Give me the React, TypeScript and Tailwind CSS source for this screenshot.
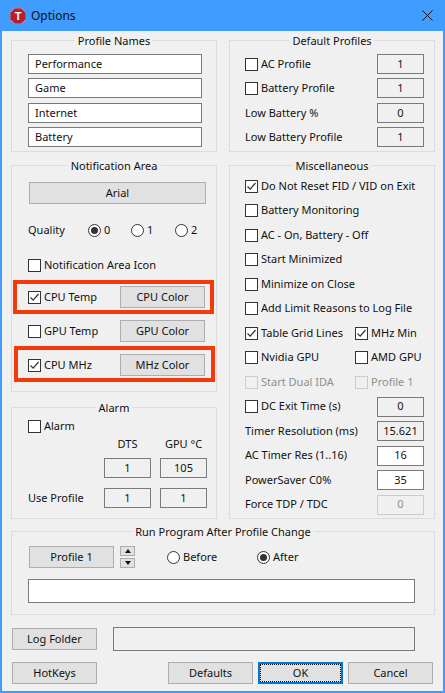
import type { ReactNode } from "react";

const Group = ({ title, className, children }: { title: string; className: string; children: ReactNode }) => (
  <div className={`relative border border-[#dcdcdc] ${className}`}>
    <span className="absolute -top-2 left-1/2 -translate-x-1/2 bg-[#f0f0f0] px-[3px] leading-4 whitespace-nowrap">
      {title}
    </span>
    {children}
  </div>
);

const Check = ({ label, checked, disabled }: { label: string; checked?: boolean; disabled?: boolean }) => (
  <div className={`flex h-5 items-center gap-[3px] whitespace-nowrap ${disabled ? "text-[#8f8f8f]" : ""}`}>
    <div className={`flex size-[13px] shrink-0 items-center justify-center border ${disabled ? "border-[#cccccc]" : "border-[#333333] bg-white"}`}>
      {checked && (
        <svg width="11" height="11" viewBox="0 0 11 11" fill="none" stroke="#333333" strokeWidth="1.2">
          <path d="M1.5 5.5 L4.2 8.2 L9.5 2" />
        </svg>
      )}
    </div>
    {label}
  </div>
);

const Field = ({ value, white, disabled }: { value: string; white?: boolean; disabled?: boolean }) => (
  <div
    className={`flex h-5 w-[47px] shrink-0 items-center justify-center border ${
      disabled ? "border-[#cccccc] text-[#8f8f8f]" : "border-[#7a7a7a]"
    } ${white ? "bg-white" : ""}`}
  >
    {value}
  </div>
);

const Btn = ({ label, className = "w-[85px]" }: { label: string; className?: string }) => (
  <div className={`flex h-[22px] shrink-0 items-center justify-center border border-[#adadad] bg-[#e1e1e1] ${className}`}>{label}</div>
);

const Radio = ({ label, on, className }: { label: string; on?: boolean; className: string }) => (
  <div className={`flex h-5 items-center gap-[3px] ${className}`}>
    <div className="flex size-[13px] shrink-0 items-center justify-center rounded-full border border-[#333333] bg-white">
      {on && <div className="size-[7px] rounded-full bg-[#333333]" />}
    </div>
    {label}
  </div>
);

const TextBox = ({ value }: { value: string }) => (
  <div className="flex h-5 w-[174px] items-center border border-[#7a7a7a] bg-white pl-[6px]">{value}</div>
);

const Row = ({ children }: { children: ReactNode }) => <div className="flex h-5 items-center justify-between">{children}</div>;

const RedBox = ({ className }: { className: string }) => <div className={`absolute border-[4px] border-[#f53a0a] ${className}`} />;

const App = () => {
  return (
    <div className="flex h-[693px] w-[445px] flex-col overflow-hidden border-x-2 border-b-2 border-[#409cff] bg-[#f0f0f0] font-['Noto_Sans',sans-serif] text-[11px] text-[#111111]">
      <div className="-mx-[2px] flex h-[31px] shrink-0 items-center bg-[#409cff] pr-3 pl-[10px]">
        <svg width="16" height="16" viewBox="0 0 16 16">
          <path d="M4.7 0 H11.3 L16 4.7 V11.3 L11.3 16 H4.7 L0 11.3 V4.7 Z" fill="#b7202e" stroke="#e8c4c4" strokeWidth="0.6" />
          <text x="8" y="12" textAnchor="middle" fontSize="11" fontWeight="700" fill="#ffffff" fontFamily="Liberation Sans">T</text>
        </svg>
        <span className="ml-[5px] text-[12px]">Options</span>
        <svg className="ml-auto" width="11" height="11" viewBox="0 0 11 11" stroke="#111111" strokeWidth="1" fill="none">
          <path d="M0.5 0.5 L10.5 10.5 M10.5 0.5 L0.5 10.5" />
        </svg>
      </div>

      <div className="flex flex-col pt-[9px] pr-2 pl-[9px]">
        <div className="flex gap-3">
          <div className="flex w-[206px] flex-col">
            <Group title="Profile Names" className="flex h-[112px] flex-col gap-[4.4px] pt-[13px] pl-4">
              <TextBox value="Performance" />
              <TextBox value="Game" />
              <TextBox value="Internet" />
              <TextBox value="Battery" />
            </Group>

            <Group title="Notification Area" className="mt-[13px] flex h-[227px] flex-col pt-4 pl-4">
              <Btn label="Arial" className="ml-px w-[177px]" />
              <div className="mt-4 flex h-5 items-center">
                <span className="w-[60px]">Quality</span>
                <Radio label="0" on className="w-[43px]" />
                <Radio label="1" className="w-[44px]" />
                <Radio label="2" className="w-[30px]" />
              </div>
              <div className="mt-[15px]">
                <Check label="Notification Area Icon" />
              </div>
              <div className="relative mt-[11px] flex h-[22px] items-center justify-between pr-[11px]">
                <RedBox className="-top-[6px] right-[2px] -bottom-[6px] -left-[15px]" />
                <Check label="CPU Temp" checked />
                <Btn label="CPU Color" />
              </div>
              <div className="mt-3 flex h-[22px] items-center justify-between pr-[11px]">
                <Check label="GPU Temp" />
                <Btn label="GPU Color" />
              </div>
              <div className="relative mt-3 flex h-[22px] items-center justify-between pr-[11px]">
                <RedBox className="-top-2 right-px -bottom-[6px] -left-[14px]" />
                <Check label="CPU MHz" checked />
                <Btn label="MHz Color" />
              </div>
            </Group>

            <Group title="Alarm" className="mt-[15px] flex h-[112px] flex-col pt-2 pl-4">
              <Check label="Alarm" />
              <div className="flex h-4 items-center gap-[9px] pl-[76px]">
                <span className="w-[47px] text-center">DTS</span>
                <span className="w-[47px] text-center">GPU °C</span>
              </div>
              <div className="mt-[6px] flex gap-[9px] pl-[76px]">
                <Field value="1" />
                <Field value="105" />
              </div>
              <div className="mt-[10px] flex items-center gap-[9px]">
                <span className="w-[67px]">Use Profile</span>
                <Field value="1" />
                <Field value="1" />
              </div>
            </Group>
          </div>

          <div className="flex w-[206px] flex-col">
            <Group title="Default Profiles" className="flex h-[112px] flex-col gap-[4.4px] pt-[13px] pr-[10px] pl-[15px]">
              <Row>
                <Check label="AC Profile" />
                <Field value="1" />
              </Row>
              <Row>
                <Check label="Battery Profile" />
                <Field value="1" />
              </Row>
              <Row>
                Low Battery %
                <Field value="0" />
              </Row>
              <Row>
                Low Battery Profile
                <Field value="1" />
              </Row>
            </Group>

            <Group title="Miscellaneous" className="mt-[13px] flex h-[354px] flex-col gap-[4.5px] pt-[10px] pr-[10px] pl-[15px]">
              <Check label="Do Not Reset FID / VID on Exit" checked />
              <Check label="Battery Monitoring" />
              <Check label="AC - On, Battery - Off" />
              <Check label="Start Minimized" />
              <Check label="Minimize on Close" />
              <Check label="Add Limit Reasons to Log File" />
              <div className="flex">
                <div className="w-[110px]">
                  <Check label="Table Grid Lines" checked />
                </div>
                <Check label="MHz Min" checked />
              </div>
              <div className="flex">
                <div className="w-[110px]">
                  <Check label="Nvidia GPU" />
                </div>
                <Check label="AMD GPU" />
              </div>
              <div className="flex">
                <div className="w-[110px]">
                  <Check label="Start Dual IDA" disabled />
                </div>
                <Check label="Profile 1" disabled />
              </div>
              <Row>
                <Check label="DC Exit Time (s)" />
                <Field value="0" />
              </Row>
              <Row>
                Timer Resolution (ms)
                <Field value="15.621" />
              </Row>
              <Row>
                AC Timer Res (1..16)
                <Field value="16" white />
              </Row>
              <Row>
                PowerSaver C0%
                <Field value="35" white />
              </Row>
              <Row>
                Force TDP / TDC
                <Field value="0" disabled />
              </Row>
            </Group>
          </div>
        </div>

        <Group title="Run Program After Profile Change" className="mt-3 flex h-[84px] flex-col pt-[14px] pl-4">
          <div className="flex items-center">
            <Btn label="Profile 1" className="ml-px w-[85px]" />
            <div className="ml-[6px] flex h-[22px] w-[15px] flex-col justify-between">
              <div className="flex h-[10px] items-center justify-center border border-[#adadad] bg-[#e1e1e1]">
                <div className="size-0 border-x-[3px] border-b-[4px] border-x-transparent border-b-[#111111]" />
              </div>
              <div className="flex h-[10px] items-center justify-center border border-[#adadad] bg-[#e1e1e1]">
                <div className="size-0 border-x-[3px] border-t-[4px] border-x-transparent border-t-[#111111]" />
              </div>
            </div>
            <Radio label="Before" className="ml-8 w-[90px]" />
            <Radio label="After" on className="w-[60px]" />
          </div>
          <div className="mt-[11px] h-6 w-[387px] border border-[#7a7a7a] bg-white" />
        </Group>

        <div className="mt-3 ml-px flex items-center">
          <Btn label="Log Folder" />
          <div className="ml-4 h-6 w-[302px] border border-[#7a7a7a]" />
        </div>

        <div className="mt-[11px] ml-px flex items-center">
          <Btn label="HotKeys" />
          <Btn label="Defaults" className="ml-[71px] w-[85px]" />
          <div className="ml-[5px] flex h-[22px] w-[85px] items-center justify-center border-2 border-[#0078d7] bg-[#e1e1e1] outline-1 -outline-offset-3 outline-black outline-dotted">
            OK
          </div>
          <Btn label="Cancel" className="ml-[5px] w-[85px]" />
        </div>
      </div>
    </div>
  );
};

export default App;
